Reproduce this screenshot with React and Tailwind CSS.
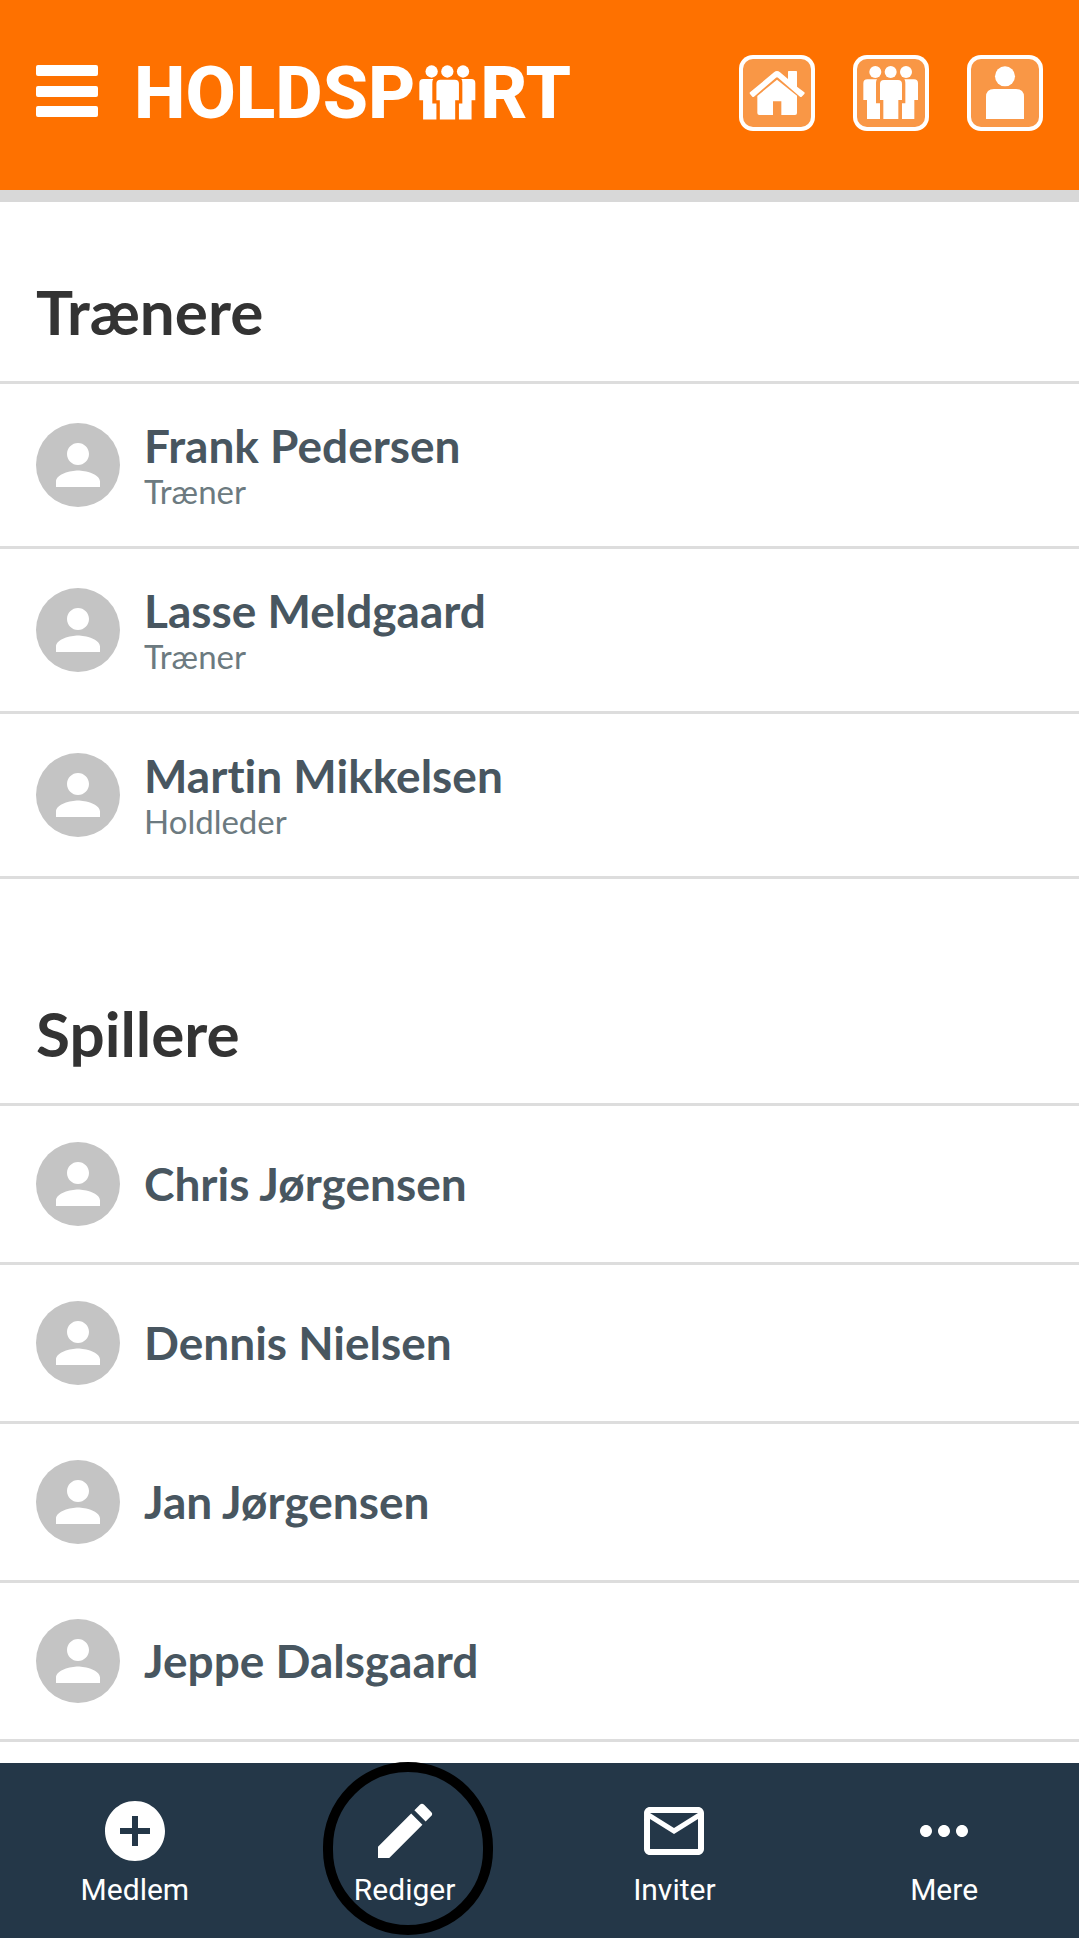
import React from "react";
import { MdAddCircle, MdEdit, MdMailOutline, MdMoreHoriz, MdPerson } from "react-icons/md";

const trainers = [
  { name: "Frank Pedersen", role: "Træner" },
  { name: "Lasse Meldgaard", role: "Træner" },
  { name: "Martin Mikkelsen", role: "Holdleder" },
];

const players = [
  { name: "Chris Jørgensen" },
  { name: "Dennis Nielsen" },
  { name: "Jan Jørgensen" },
  { name: "Jeppe Dalsgaard" },
];

const actions = [
  { label: "Medlem", Icon: MdAddCircle },
  { label: "Rediger", Icon: MdEdit, highlighted: true },
  { label: "Inviter", Icon: MdMailOutline },
  { label: "Mere", Icon: MdMoreHoriz },
];

function TeamShape() {
  return (
    <>
      <circle cx="67" cy="51" r="18" />
      <circle cx="113" cy="51" r="18" />
      <circle cx="159" cy="51" r="18" />
      <path d="M43 73H72Q69 77 69 84V145H81V192H42V135H31V85Q31 73 43 73Z" />
      <path d="M93 75H135Q147 75 147 87V135H136V192H91V135H81V87Q81 75 93 75Z" />
      <path d="M183 73H154Q157 77 157 84V145H147V192H184V135H195V85Q195 73 183 73Z" />
    </>
  );
}

function HomeShape() {
  return (
    <>
      <path d="M33 112L105 52Q114 44 123 52L147 72V50Q147 48 149 48H172Q174 48 174 50V95L196 112Q198 114 196 117L188 125Q186 127 183 125L117 68Q114 66 111 68L45 125Q42 127 40 125L33 117Q31 114 33 112Z" />
      <path d="M114 74L174 122V174Q174 180 168 180H127V139H102V180H61Q55 180 55 174V123Z" />
    </>
  );
}

function PersonShape() {
  return (
    <>
      <circle cx="114" cy="64" r="30" />
      <path d="M81 102H147Q171 102 171 126V192H57V126Q57 102 81 102Z" />
    </>
  );
}

function HeaderButton({ label, children }) {
  return (
    <button
      type="button"
      aria-label={label}
      className="size-[76px] overflow-hidden rounded-[14px] bg-white"
    >
      <svg viewBox="0 0 228 228" className="size-full" fill="white" aria-hidden="true">
        <rect x="12" y="12" width="204" height="204" rx="30" fill="#f99746" />
        {children}
      </svg>
    </button>
  );
}

function Header() {
  return (
    <header className="flex items-center justify-between border-b-12 border-[#d8d8d8] bg-[#fe7100] px-9 pt-[55px] pb-[59px]">
      <div className="flex items-center gap-9">
        <button type="button" aria-label="Menu">
          <svg viewBox="0 0 62 56" className="h-14 w-[62px]" fill="white" aria-hidden="true">
            <rect y="0" width="62" height="11" rx="2" />
            <rect y="21" width="62" height="11" rx="2" />
            <rect y="41" width="62" height="11" rx="2" />
          </svg>
        </button>
        <a
          href="#"
          aria-label="Holdsport"
          className="flex items-center gap-1 font-[Roboto,sans-serif] text-[73px]/[76px] font-extrabold text-white"
        >
          <span>HOLDSP</span>
          <svg viewBox="30 32 167 167" className="h-[57px] w-[57px]" fill="white" aria-hidden="true">
            <TeamShape />
          </svg>
          <span>RT</span>
        </a>
      </div>
      <div className="flex gap-[38px]">
        <HeaderButton label="Hjem">
          <HomeShape />
        </HeaderButton>
        <HeaderButton label="Hold">
          <TeamShape />
        </HeaderButton>
        <HeaderButton label="Profil">
          <PersonShape />
        </HeaderButton>
      </div>
    </header>
  );
}

function Member({ name, role }) {
  return (
    <li className="border-b-3 border-[#dddddd]">
      <a href="#" className="flex items-center gap-6 px-9 py-9">
        <span className="flex size-[84px] shrink-0 items-center justify-center rounded-full bg-[#c4c4c4]">
          <MdPerson className="size-[66px] text-white" aria-hidden="true" />
        </span>
        <span className="flex flex-col">
          <span className="text-[46px]/[52px] font-bold text-[#485660]">{name}</span>
          {role && <span className="text-[33px]/[38px] text-[#6c7a80]">{role}</span>}
        </span>
      </a>
    </li>
  );
}

function Section({ title, members }) {
  return (
    <section className="pb-[45px] last:pb-0">
      <h2 className="border-b-3 border-[#dddddd] px-9 pt-[73px] pb-[34px] text-[62px]/[72px] font-bold text-[#333333]">
        {title}
      </h2>
      <ul>
        {members.map((member) => (
          <Member key={member.name} {...member} />
        ))}
      </ul>
    </section>
  );
}

export default function App() {
  return (
    <div className="flex min-h-screen flex-col bg-white font-[Lato,sans-serif] [font-variant-ligatures:none]">
      <Header />
      <main className="flex-1">
        <Section title="Trænere" members={trainers} />
        <Section title="Spillere" members={players} />
      </main>
      <nav className="sticky bottom-0 grid grid-cols-4 bg-[#243748] font-[Roboto,sans-serif] text-white">
        {actions.map(({ label, Icon, highlighted }) => (
          <button key={label} type="button" className="relative flex flex-col items-center gap-[5px] pt-8 pb-[30px]">
            {highlighted && (
              <span className="absolute inset-x-0 -top-px left-[7px] mx-auto h-[173px] w-[170px] rounded-full border-10 border-black" />
            )}
            <Icon className="size-[72px]" aria-hidden="true" />
            <span className="text-[30px]/[36px]">{label}</span>
          </button>
        ))}
      </nav>
    </div>
  );
}
